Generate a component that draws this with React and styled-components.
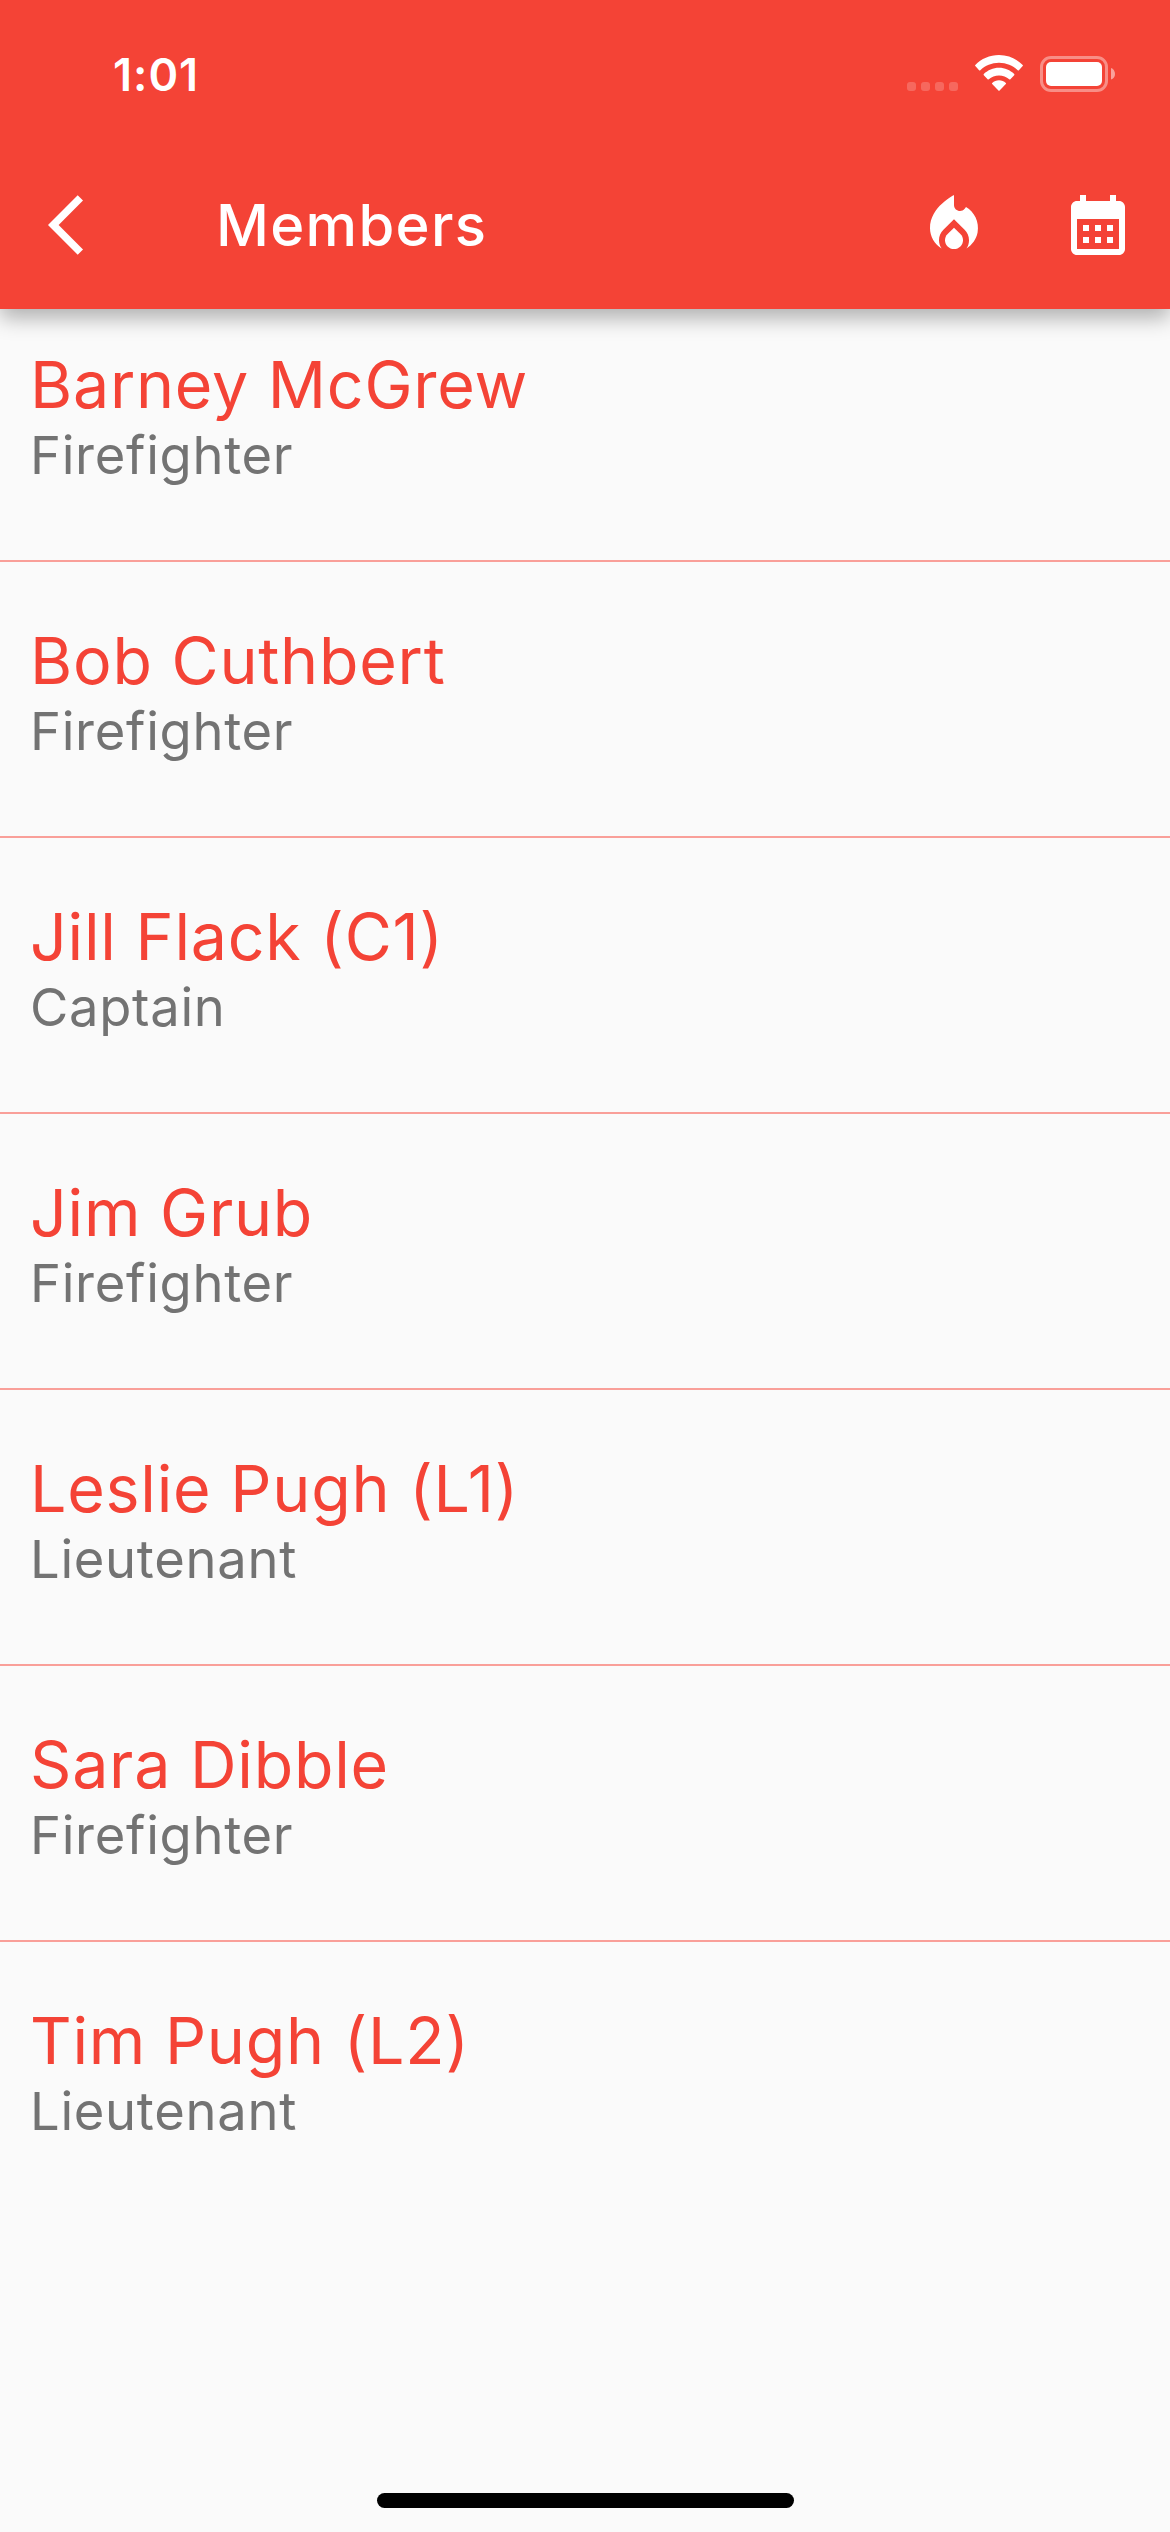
import React from 'react';
import styled, { createGlobalStyle } from 'styled-components';

const members = [
  { name: 'Barney McGrew', rank: 'Firefighter' },
  { name: 'Bob Cuthbert', rank: 'Firefighter' },
  { name: 'Jill Flack (C1)', rank: 'Captain' },
  { name: 'Jim Grub', rank: 'Firefighter' },
  { name: 'Leslie Pugh (L1)', rank: 'Lieutenant' },
  { name: 'Sara Dibble', rank: 'Firefighter' },
  { name: 'Tim Pugh (L2)', rank: 'Lieutenant' }
];

const GlobalStyle = createGlobalStyle`
  body {
    margin: 0;
    background-color: #FAFAFA;
    font-family: Inter, "Liberation Sans", sans-serif;
  }

  * {
    box-sizing: border-box;
  }
`;

const Screen = styled.div`
  width: 1170px;
  height: 2532px;
  display: flex;
  flex-direction: column;
  background-color: #FAFAFA;
  overflow: hidden;
`;

const Header = styled.header`
  height: 309px;
  flex-shrink: 0;
  background-color: #F44336;
  color: #FFF;
  position: relative;
  z-index: 1;
  box-shadow: 0px 9px 20px 0px rgba(0,0,0,0.3);
`;

const StatusBar = styled.div`
  height: 141px;
  padding: 0px 55px 0px 113px;
  display: flex;
  justify-content: space-between;
`;

const Time = styled.span`
  margin-top: 47px;
  font-size: 45px;
  line-height: 56px;
  font-weight: 600;
  letter-spacing: 1px;
`;

const StatusIcons = styled.div`
  margin-top: 55px;
  height: 37px;
  display: flex;
  align-items: flex-end;

  .wifi {
    margin: 0px 17px 1px;
  }
`;

const Toolbar = styled.div`
  height: 168px;
  display: flex;
  align-items: center;
`;

const IconButton = styled.button`
  width: 144px;
  height: 144px;
  padding: 0px;
  border: none;
  background: none;
  color: #FFF;
  display: flex;
  align-items: center;
  justify-content: center;

  svg {
    width: 72px;
    height: 72px;
    fill: currentColor;
  }
`;

const BackButton = styled(IconButton)`
  width: 168px;
  padding-left: 48px;
  justify-content: flex-start;
`;

const Title = styled.h1`
  flex: 1;
  margin: 0px;
  padding-left: 48px;
  font-size: 58px;
  line-height: 72px;
  font-weight: 500;
  letter-spacing: 1.3px;
`;

const List = styled.ul`
  flex: 1;
  margin: -23px 0px 0px;
  padding: 0px;
  list-style-type: none;
`;

const Row = styled.li`
  height: 276px;
  padding: 60px 30px 0px;
  border-bottom: ${props => props.$last ? 'none' : '2px solid #F99F99'};
`;

const Name = styled.div`
  font-size: 64.5px;
  line-height: 78px;
  letter-spacing: 0.75px;
  color: #F44336;
`;

const Rank = styled.div`
  margin-top: -1px;
  font-size: 52.5px;
  line-height: 64px;
  letter-spacing: 0.7px;
  color: #737373;
`;

const HomeIndicator = styled.div`
  width: 417px;
  height: 15px;
  margin: 0px auto 24px;
  border-radius: 8px;
  background-color: #000;
`;

function SignalIcon() {
  return (
    <svg width="51" height="10" viewBox="0 0 51 10" fill="#FFF" fillOpacity="0.2">
      {[0, 14, 28, 42].map(x => <rect key={x} x={x} y="0" width="9" height="9" rx="3" />)}
    </svg>
  );
}

function WifiIcon() {
  return (
    <svg className="wifi" width="48" height="36" viewBox="0 0 48 36" fill="#FFF">
      <path d="M24 0C33.300 0 41.700 3.800 47.700 9.900Q48.200 10.500 47.700 11.100L43.900 15.200Q43.300 15.700 42.700 15.200C37.800 10.600 31.300 7.800 24 7.800S10.200 10.600 5.300 15.200Q4.700 15.700 4.100 15.200L.3 11.100Q-.2 10.500.3 9.900C6.300 3.800 14.700 0 24 0Z" />
      <path d="M24 12.800C29.900 12.800 35.200 15.200 39.200 19Q39.700 19.600 39.200 20.200L35.400 24.300Q34.800 24.800 34.200 24.300C31.500 21.900 27.900 20.500 24 20.500S16.500 21.900 13.800 24.300Q13.200 24.800 12.600 24.300L8.800 20.200Q8.300 19.600 8.800 19C12.800 15.200 18.100 12.800 24 12.800Z" />
      <path d="M24 25.300C26.600 25.300 29 26.300 30.800 27.900Q31.300 28.500 30.800 29.100L24.600 35.500Q24 36.100 23.400 35.500L17.200 29.100Q16.700 28.500 17.200 27.900C19 26.300 21.400 25.300 24 25.300Z" />
    </svg>
  );
}

function BatteryIcon() {
  return (
    <svg width="75" height="37" viewBox="0 0 75 37" fill="#FFF">
      <rect x="1.500" y="2.500" width="65" height="33" rx="9.500" fill="none" stroke="#FFF" strokeOpacity="0.4" strokeWidth="3" />
      <rect x="6" y="7" width="56" height="24" rx="5" />
      <path d="M71 13C73.500 13.800 75 16 75 19S73.500 23.700 71 24.500Z" fillOpacity="0.5" />
    </svg>
  );
}

function BackIcon() {
  return (
    <svg viewBox="0 0 24 24">
      <path d="M11.670 3.870L9.900 2.100 0 12l9.900 9.900 1.770-1.770L3.540 12z" />
    </svg>
  );
}

function FireIcon() {
  return (
    <svg viewBox="0 0 24 24">
      <path d="M12 12.900l-2.130 2.090C9.310 15.550 9 16.280 9 17.060 9 18.680 10.350 20 12 20s3-1.320 3-2.940c0-.78-.31-1.520-.87-2.070L12 12.900z" />
      <path d="M16 6l-.44.550C14.380 8.020 12 7.190 12 5.300V2S4 6 4 13c0 2.920 1.560 5.470 3.890 6.860-.56-.79-.89-1.760-.89-2.800 0-1.320.52-2.560 1.470-3.500L12 10.100l3.530 3.470c.95.930 1.470 2.170 1.470 3.500 0 1.020-.31 1.960-.85 2.750 1.890-1.150 3.290-3.060 3.710-5.300.66-3.550-1.070-6.900-3.860-8.520z" />
    </svg>
  );
}

function CalendarIcon() {
  return (
    <svg viewBox="0 0 24 24">
      <path d="M19 4h-1V2h-2v2H8V2H6v2H5c-1.110 0-2 .9-2 2v14c0 1.100.890 2 2 2h14c1.100 0 2-.9 2-2V6c0-1.100-.9-2-2-2zm0 16H5V10h14v10z" />
      <path d="M7 12h2v2H7zm4 0h2v2h-2zm4 0h2v2h-2zm-8 4h2v2H7zm4 0h2v2h-2zm4 0h2v2h-2z" />
    </svg>
  );
}

export default function App() {
  return (
    <Screen>
      <GlobalStyle />
      <Header>
        <StatusBar>
          <Time>1:01</Time>
          <StatusIcons>
            <SignalIcon />
            <WifiIcon />
            <BatteryIcon />
          </StatusIcons>
        </StatusBar>
        <Toolbar>
          <BackButton><BackIcon /></BackButton>
          <Title>Members</Title>
          <IconButton><FireIcon /></IconButton>
          <IconButton><CalendarIcon /></IconButton>
        </Toolbar>
      </Header>
      <List>
        {members.map((item, index) => (
          <Row key={item.name} $last={index === members.length - 1}>
            <Name>{item.name}</Name>
            <Rank>{item.rank}</Rank>
          </Row>
        ))}
      </List>
      <HomeIndicator />
    </Screen>
  );
}
